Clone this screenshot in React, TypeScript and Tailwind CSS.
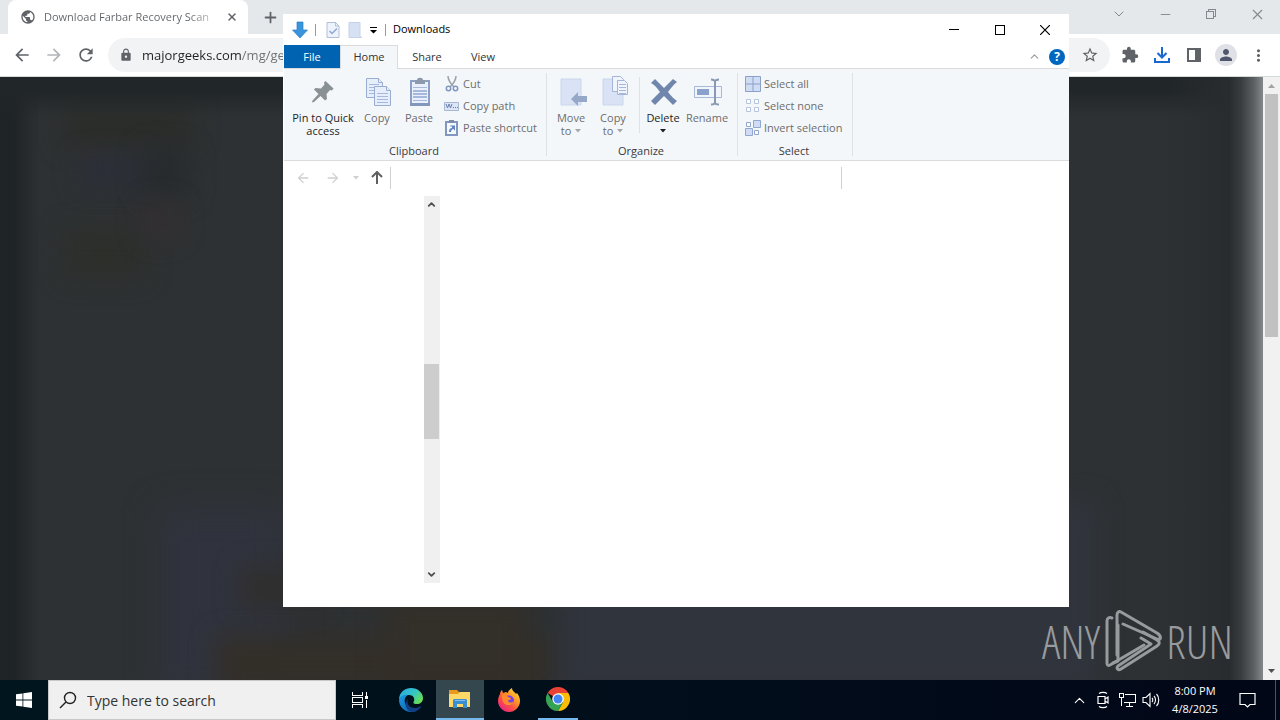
import type { ReactNode } from 'react';
import { ChevronDown, ChevronUp, Minus, Plus, X } from 'lucide-react';
import {
  MdArrowBack,
  MdArrowForward,
  MdExtension,
  MdLock,
  MdMoreVert,
  MdPerson,
  MdPublic,
  MdRefresh,
  MdStarBorder,
} from 'react-icons/md';

interface IconButtonProps {
  label: string;
  className?: string;
  children?: ReactNode;
}

const IconButton = ({ label, className = '', children }: IconButtonProps) => (
  <button type="button" aria-label={label} className={`flex shrink-0 items-center justify-center ${className}`}>
    {children}
  </button>
);

/* ---------- Browser ---------- */

const RestoreIcon = () => (
  <svg width="12" height="12" viewBox="0 0 12 12" fill="none" stroke="currentColor" shapeRendering="crispEdges">
    <path d="M1.5 3.5h7v7h-7zM3.5 3.5v-2h7v7h-2" />
  </svg>
);

const DownloadTrayIcon = () => (
  <svg width="18" height="18" viewBox="0 0 18 18" fill="none" stroke="#1967d2" strokeWidth="2">
    <path d="M9 1v10M4.5 7 9 11.5 13.5 7M2 12v4h14v-4" />
  </svg>
);

const SidePanelIcon = () => (
  <svg width="14" height="14" viewBox="0 0 14 14">
    <path d="M0 0h14v14H0zM2 2v10h6V2z" fill="#5f6368" fillRule="evenodd" />
  </svg>
);

const TabStrip = () => (
  <div className="flex h-[34px] shrink-0 bg-[#e5e8eb] pl-2">
    <div className="flex w-60 items-center rounded-t-lg bg-white pl-3 pr-2">
      <MdPublic className="size-4 shrink-0 text-[#5f6368]" />
      <span className="ml-2 w-[170px] whitespace-nowrap bg-[linear-gradient(to_right,#5f6368_145px,#d0d2d4_170px)] bg-clip-text text-[11px] text-transparent">
        Download Farbar Recovery Scan
      </span>
      <IconButton label="Close tab" className="ml-2.5 size-4 text-[#5f6368]">
        <X size={12} strokeWidth={3} />
      </IconButton>
    </div>
    <IconButton label="New tab" className="ml-2.5 w-6 text-[#5f6368]">
      <Plus size={17} strokeWidth={2.5} />
    </IconButton>
    <div className="ml-auto flex pb-1.5 text-[#85888c]">
      <IconButton label="Search tabs" className="w-[46px]">
        <ChevronDown size={16} strokeWidth={1.5} />
      </IconButton>
      <IconButton label="Minimize" className="w-[46px]">
        <Minus size={15} strokeWidth={1.5} />
      </IconButton>
      <IconButton label="Restore" className="w-[46px]">
        <RestoreIcon />
      </IconButton>
      <IconButton label="Close" className="w-[46px]">
        <X size={17} strokeWidth={1.5} />
      </IconButton>
    </div>
  </div>
);

const Toolbar = () => (
  <div className="flex h-[43px] shrink-0 items-center border-b border-[#d5dcd8] bg-white px-1.5 text-[#5f6368]">
    <IconButton label="Back" className="size-8">
      <MdArrowBack size={20} />
    </IconButton>
    <IconButton label="Forward" className="size-8 text-[#b3b6b9]">
      <MdArrowForward size={20} />
    </IconButton>
    <IconButton label="Reload" className="size-8">
      <MdRefresh size={20} />
    </IconButton>
    <div className="ml-1.5 mr-1 flex h-[34px] flex-1 items-center rounded-full bg-[#f1f3f4] pl-[11px] pr-2">
      <MdLock size={14} className="mr-[9px] shrink-0" />
      <input
        aria-label="Address and search bar"
        readOnly
        value="majorgeeks.com/mg/get"
        className="min-w-0 flex-1 bg-[linear-gradient(to_right,#202124_99px,#6c7074_99px)] bg-clip-text pt-px text-[13px] text-transparent outline-none"
      />
      <IconButton label="Bookmark this tab" className="size-6">
        <MdStarBorder size={18} />
      </IconButton>
    </div>
    <IconButton label="Extensions" className="size-8">
      <MdExtension size={18} />
    </IconButton>
    <IconButton label="Downloads" className="size-8">
      <DownloadTrayIcon />
    </IconButton>
    <IconButton label="Side panel" className="size-8">
      <SidePanelIcon />
    </IconButton>
    <IconButton label="Profile" className="size-8">
      <span className="flex size-[22px] items-center justify-center rounded-full bg-[#dfe1e6]">
        <MdPerson size={18} className="text-[#50566e]" />
      </span>
    </IconButton>
    <IconButton label="Menu" className="size-8">
      <MdMoreVert size={19} />
    </IconButton>
  </div>
);

const Watermark = () => (
  <div className="absolute bottom-2 right-[30px] flex items-center gap-1 font-['Open_Sans_Condensed_Light','Open_Sans_Condensed','Liberation_Sans_Narrow','Liberation_Sans',sans-serif] text-[46px] font-light leading-none text-[#989b9e]">
    <span>ANY</span>
    <svg width="58" height="62" viewBox="0 0 58 62" fill="none" stroke="currentColor" strokeWidth="3" strokeLinejoin="round" strokeLinecap="round">
      <path d="M8 8C5 7 3 8 3 11v42c0 2 1 3 3 2l34-20" />
      <path d="M13 45V5c0-3 2-4 4-3l36 21c3 2 4 4 3 6-1 1-2 0-3 0L19 14" />
      <path d="m9 53 5-2V15" />
      <path d="m39 22 14 8c3 2 3 4 0 6L17 59c-3 2-5-1-3-3l33-22-10-6" />
    </svg>
    <span>RUN</span>
  </div>
);

const WebPage = () => (
  <div className="flex min-h-0 flex-1">
    <main className="relative flex-1 overflow-hidden bg-[#2e3133]">
      {/* Blurred page content behind the dark overlay */}
      <div className="absolute left-16 top-7 h-10 w-32 bg-[#2b2d2a] blur-md" />
      <div className="absolute left-20 top-20 h-7 w-16 bg-[#2c2e39] blur-md" />
      <div className="absolute left-36 top-18 h-12 w-11 bg-[#272b2e] blur-md" />
      <div className="absolute left-16 top-38 h-12 w-20 bg-[#2d2f2b] blur-md" />
      <div className="absolute left-36 top-32 h-8 w-8 bg-[#352f32] blur-md" />
      <div className="absolute -bottom-5 left-40 h-48 w-32 bg-[#30333d] blur-lg" />
      <div className="absolute bottom-18 left-60 h-10 w-20 bg-[#302f2e] blur-md" />
      <div className="absolute -bottom-3 left-54 h-14 w-84 bg-[#332f29] blur-md" />
      <div className="absolute -bottom-3 left-96 h-24 w-36 bg-[#332f29] blur-md" />
      <div className="absolute -bottom-3 left-140 h-48 w-134 bg-[#30343d] blur-md" />
      <div className="absolute inset-y-0 left-0 w-10 bg-linear-to-r from-[#1f2427] from-35% to-transparent" />
      <div className="absolute inset-x-0 top-0 h-10 bg-linear-to-b from-[#212628] from-35% to-transparent" />
      <div className="absolute inset-y-0 right-0 w-24 bg-[linear-gradient(to_right,transparent,#282c2e_65%,#383c3e_77%,#5c5f61_90%,#85888a)]" />
      <Watermark />
    </main>
    <div className="flex w-[17px] flex-col items-center bg-[#f1f1f1]">
      <svg width="17" height="17" viewBox="0 0 17 17">
        <path d="m5 11 3.500-4 3.500 4z" fill="#a3a3a3" />
      </svg>
      <div className="h-[243px] w-[13px] bg-[#c1c1c1]" />
      <svg className="mt-auto" width="17" height="17" viewBox="0 0 17 17">
        <path d="m5 6 3.500 4L12 6z" fill="#505050" />
      </svg>
    </div>
  </div>
);

/* ---------- Explorer icons ---------- */

const DownArrowIcon = () => (
  <svg width="16" height="18" viewBox="0 0 16 18">
    <path d="M5 1h6v8h4.500L8 17 .5 9H5z" fill="#3a95dc" stroke="#2b7fc4" strokeWidth=".7" />
  </svg>
);

const PropertiesIcon = () => (
  <svg width="14" height="16" viewBox="0 0 14 16">
    <path d="M1 .5h8.500L13 4v11.500H1z" fill="#edf3fc" stroke="#b3bfd4" />
    <path d="M9.500.5V4H13" fill="none" stroke="#b3bfd4" />
    <path d="m3.500 9 2.500 2.500L11 6.500" fill="none" stroke="#8fa8d4" strokeWidth="1.500" />
  </svg>
);

const NewFolderIcon = () => (
  <svg width="14" height="16" viewBox="0 0 14 16">
    <path d="M1 .5h11v13l1.500 2H1z" fill="#d6e1f4" stroke="#c5d2ea" />
  </svg>
);

const PinIcon = () => (
  <svg width="32" height="32" viewBox="0 0 32 32" fill="#8a9194">
    <path d="m18.500 6 8 7.500-1.500 2-2-.5-3.500 4 .5 5-2 1.500-4.500-4.500L7 27l-2 .5.500-2 6-6.500L7 14.500 8.500 13l5.500.5 3.500-4-.5-2z" />
  </svg>
);

const SheetLines = ({ x, y, w }: { x: number; y: number; w: number }) => (
  <path
    d={`M${x} ${y}h${w}M${x} ${y + 3}h${w}M${x} ${y + 6}h${w}M${x} ${y + 9}h${w}`}
    stroke="#a6b9dc"
    fill="none"
  />
);

const CopyIcon = () => (
  <svg width="32" height="32" viewBox="0 0 32 32" fill="#e6edfb" stroke="#9aadd0">
    <path d="M5.500 3.500h12l4 4v15h-16z" />
    <path d="M17.500 3.500v4h4" />
    <SheetLines x={8} y={9.5} w={10} />
    <path d="M13.500 11.500h12l4 4v15h-16z" />
    <path d="M25.500 11.500v4h4" />
    <SheetLines x={16} y={18.5} w={11} />
  </svg>
);

const PasteIcon = () => (
  <svg width="32" height="32" viewBox="0 0 32 32">
    <path d="M8 6h18v24H8z" fill="#eaf0fb" stroke="#8d9fc2" strokeWidth="2" />
    <path d="M12 5h2c0-3 6-3 6 0h2v4H12z" fill="#8c98ac" />
    <SheetLines x={10} y={12.5} w={14} />
    <SheetLines x={10} y={16.5} w={14} />
    <path d="M7 28h20v3H7z" fill="#8396bb" />
  </svg>
);

const CutIcon = () => (
  <svg width="16" height="16" viewBox="0 0 16 16" fill="none" strokeWidth="1.500">
    <path d="M4 0c0 4 2 7 6 11M12 0c0 4-2 7-6 11" stroke="#9ca2a8" />
    <circle cx="4.500" cy="12.500" r="2.200" stroke="#8097bf" />
    <circle cx="11.500" cy="12.500" r="2.200" stroke="#8097bf" />
  </svg>
);

const CopyPathIcon = () => (
  <svg width="16" height="16" viewBox="0 0 16 16">
    <path d="M.5 4.500h14v8H.5z" fill="#dbe5f6" stroke="#a8b8d4" />
    <path d="m2 6 1.500 4L5 6l1.500 4L8 6M9 9.500h1M11 9.500h1M13 9.500h1" stroke="#6981ad" fill="none" />
  </svg>
);

const PasteShortcutIcon = () => (
  <svg width="16" height="16" viewBox="0 0 16 16">
    <path d="M2 2h11v13H2z" fill="#f4f8ff" stroke="#8297bf" strokeWidth="2" />
    <path d="M5 0h5v3H5z" fill="#7d8ba6" />
    <path d="M5 12c0-3 1-4 3-4V6.500H6.500l-.5-1h5v5l-1-.5V9c-2 0-3 1-3 3z" fill="#6485bd" />
  </svg>
);

const MoveToIcon = () => (
  <svg width="32" height="32" viewBox="0 0 32 32">
    <path d="M6 4h20v26H6z" fill="#d9e3f5" stroke="#c9d6ed" />
    <path d="m16 24 7-7v4h9v6h-9v4z" fill="#96a8c8" />
  </svg>
);

const CopyToIcon = () => (
  <svg width="32" height="32" viewBox="0 0 32 32">
    <path d="M6 4h20v26H6z" fill="#d9e3f5" stroke="#c9d6ed" />
    <g fill="#f0f4fc" stroke="#a3b5d8">
      <path d="M15.500 1.500h8l3 3v12h-11z" />
      <path d="M20.500 5.500h7l3 3v11h-10z" />
      <SheetLines x={22} y={9.5} w={7} />
    </g>
  </svg>
);

const DeleteIcon = () => (
  <svg width="32" height="32" viewBox="0 0 32 32">
    <path d="M8 4c3 3 6 6 9 9 3-3 6-6 9-9l4 3c-4 3-6 6-9 10 3 4 6 7 9 9l-4 4c-3-3-6-6-9-9-3 3-6 6-9 9l-4-4c3-3 6-6 9-9-3-4-5-7-9-9z" fill="#7186ad" />
  </svg>
);

const RenameIcon = () => (
  <svg width="32" height="32" viewBox="0 0 32 32">
    <path d="M3.500 11.500h27v11h-27z" fill="#f1f5fc" stroke="#a8b8d8" />
    <path d="M6 14h12v6H6z" fill="#8da2cb" />
    <path d="M20 4.500c3 0 4 1 4 2.500 0-1.500 1-2.500 4-2.500M24 6v21M20 29.500c3 0 4-1 4-2.500 0 1.500 1 2.500 4 2.500" stroke="#8a98b2" strokeWidth="2" fill="none" />
  </svg>
);

const SelectAllIcon = () => (
  <svg width="16" height="16" viewBox="0 0 16 16" fill="#cfdcf3" stroke="#8ca1c9">
    <path d="M.5.5h15v15H.5zM8 0v16M0 8h16" />
  </svg>
);

const SelectNoneIcon = () => (
  <svg width="16" height="16" viewBox="0 0 16 16" fill="#fff" stroke="#b6c4df">
    <path d="M1.500 1.500h4v4h-4zM9.500 1.500h4v4h-4zM1.500 9.500h4v4h-4zM9.500 9.500h4v4h-4z" />
  </svg>
);

const InvertSelectionIcon = () => (
  <svg width="16" height="16" viewBox="0 0 16 16" stroke="#92a7cf">
    <path d="M1.500 2.500h4v4h-4zM9.500 10.500h4v4h-4z" fill="#fff" />
    <path d="M8.500.5h7v7h-7zM.5 8.500h7v7h-7z" fill="#cfdcf3" />
  </svg>
);

const Caret = ({ className = '' }: { className?: string }) => (
  <svg width="6" height="4" viewBox="0 0 6 4" className={`inline-block ${className}`}>
    <path d="M0 0h6L3 3.500z" fill="currentColor" />
  </svg>
);

/* ---------- Explorer window ---------- */

interface LargeButtonProps {
  icon: ReactNode;
  lines: string[];
  width: string;
  enabled?: boolean;
  menu?: boolean;
}

const LargeButton = ({ icon, lines, width, enabled = false, menu = false }: LargeButtonProps) => (
  <button
    type="button"
    className={`flex flex-col items-center whitespace-nowrap pt-1.5 leading-[13px] ${width} ${
      enabled ? 'text-[#1e1e1e]' : 'text-[#6d6d6d]'
    }`}
  >
    {icon}
    <span className="mt-1">{lines[0]}</span>
    <span className="flex h-[13px] items-center gap-1">
      {lines[1]}
      {menu && <Caret className={enabled ? '' : 'text-[#a6a6a6]'} />}
    </span>
  </button>
);

const SmallButton = ({ icon, label }: { icon: ReactNode; label: string }) => (
  <button type="button" className="flex h-[22px] items-center gap-[3px] whitespace-nowrap text-[#6d6d6d]">
    {icon}
    <span>{label}</span>
  </button>
);

const RibbonGroup = ({ title, width, children }: { title: string; width: string; children: ReactNode }) => (
  <section className={`relative flex flex-col ${width}`}>
    <div className="flex flex-1">{children}</div>
    <h2 className="pb-[3px] pr-[3px] text-center leading-[13px] text-[#3a3a3a]">{title}</h2>
    <span className="absolute bottom-1 right-0 top-1 w-px bg-[#dfe2e5]" />
  </section>
);

const Ribbon = () => (
  <div className="flex h-[92px] shrink-0 border-b border-[#d9dbdd] bg-[#f4f7fa] text-[11px]">
    <RibbonGroup title="Clipboard" width="w-[263px]">
      <div className="flex pl-1.5">
        <LargeButton icon={<PinIcon />} lines={['Pin to Quick', 'access']} width="w-[66px]" enabled />
        <LargeButton icon={<CopyIcon />} lines={['Copy']} width="w-[42px]" />
        <LargeButton icon={<PasteIcon />} lines={['Paste']} width="w-[42px]" />
      </div>
      <div className="flex flex-col pl-1 pt-1">
        <SmallButton icon={<CutIcon />} label="Cut" />
        <SmallButton icon={<CopyPathIcon />} label="Copy path" />
        <SmallButton icon={<PasteShortcutIcon />} label="Paste shortcut" />
      </div>
    </RibbonGroup>
    <RibbonGroup title="Organize" width="w-[191px]">
      <div className="flex pl-[3px]">
        <LargeButton icon={<MoveToIcon />} lines={['Move', 'to']} width="w-[42px]" menu />
        <LargeButton icon={<CopyToIcon />} lines={['Copy', 'to']} width="w-[42px]" menu />
      </div>
      <span className="ml-[5px] mr-px mt-2 h-14 w-px bg-[#dfe2e5]" />
      <LargeButton icon={<DeleteIcon />} lines={['Delete']} width="w-[44px]" enabled menu />
      <LargeButton icon={<RenameIcon />} lines={['Rename']} width="w-[44px]" />
    </RibbonGroup>
    <RibbonGroup title="Select" width="w-[115px]">
      <div className="flex flex-col pl-[7px] pt-1">
        <SmallButton icon={<SelectAllIcon />} label="Select all" />
        <SmallButton icon={<SelectNoneIcon />} label="Select none" />
        <SmallButton icon={<InvertSelectionIcon />} label="Invert selection" />
      </div>
    </RibbonGroup>
  </div>
);

const TitleBar = () => (
  <div className="flex h-[31px] shrink-0 items-center pl-2 pr-px">
    <DownArrowIcon />
    <span className="ml-[7px] h-3 w-px bg-[#9a9a9a]" />
    <IconButton label="Properties" className="ml-2.5">
      <PropertiesIcon />
    </IconButton>
    <IconButton label="New folder" className="ml-2">
      <NewFolderIcon />
    </IconButton>
    <IconButton label="Customize Quick Access Toolbar" className="ml-2 pt-0.5">
      <svg width="7" height="7" viewBox="0 0 7 7">
        <path d="M0 0h7v1H0zM0 3h7L3.500 6.500z" />
      </svg>
    </IconButton>
    <span className="ml-2 h-3 w-px bg-[#9a9a9a]" />
    <h1 className="ml-[7px] text-[11px] text-black">Downloads</h1>
    <div className="ml-auto flex h-full text-black">
      <IconButton label="Minimize" className="w-[46px]">
        <svg width="10" height="1">
          <path d="M0 0h10v1H0z" />
        </svg>
      </IconButton>
      <IconButton label="Maximize" className="w-[45px]">
        <svg width="10" height="10" viewBox="0 0 10 10" fill="none" stroke="currentColor" shapeRendering="crispEdges">
          <path d="M.5.5h9v9h-9z" />
        </svg>
      </IconButton>
      <IconButton label="Close" className="w-[46px]">
        <svg width="10" height="10" viewBox="0 0 10 10" stroke="currentColor" strokeWidth="1.200">
          <path d="m0 0 10 10M10 0 0 10" />
        </svg>
      </IconButton>
    </div>
  </div>
);

const RibbonTabs = () => (
  <div className="flex h-6 shrink-0 items-stretch border-b border-[#dadbdc] text-[11px] text-[#333]">
    <button type="button" className="w-14 bg-[#0063b1] pt-px text-white">
      File
    </button>
    <button type="button" className="-mb-px w-[58px] border border-b-0 border-[#dadbdc] bg-[#f4f7fa]">
      Home
    </button>
    <button type="button" className="w-[58px] pt-px">
      Share
    </button>
    <button type="button" className="w-[54px] pt-px">
      View
    </button>
    <IconButton label="Minimize the Ribbon" className="ml-auto mr-2 text-[#9a9a9a]">
      <ChevronUp size={13} strokeWidth={2} />
    </IconButton>
    <IconButton label="Help" className="mr-1">
      <span className="flex size-4 items-center justify-center rounded-full bg-[#0067c0] text-[12px] font-bold text-white">
        ?
      </span>
    </IconButton>
  </div>
);

const ExplorerWindow = () => (
  <div className="absolute left-[283px] top-[14px] flex h-[593px] w-[786px] flex-col bg-white pl-px">
    <TitleBar />
    <RibbonTabs />
    <Ribbon />
    <div className="flex h-[35px] shrink-0 items-center pb-px">
      <IconButton label="Back" className="ml-[7px] w-6 text-[#d0d0d0]">
        <MdArrowBack size={16} />
      </IconButton>
      <IconButton label="Forward" className="ml-1.5 w-6 text-[#d0d0d0]">
        <MdArrowForward size={16} />
      </IconButton>
      <IconButton label="Recent locations" className="ml-[7px] w-2 text-[#d0d0d0]">
        <Caret />
      </IconButton>
      <IconButton label="Up" className="ml-2 mr-1 w-[18px] text-[#5f5f5f]">
        <svg width="14" height="14" viewBox="0 0 14 14" fill="none" stroke="currentColor" strokeWidth="2">
          <path d="M7 13V1M2 6l5-5 5 5" />
        </svg>
      </IconButton>
      <input aria-label="Address" className="h-[22px] w-[451px] border-l border-[#d0d0d0] outline-none" />
      <input aria-label="Search Downloads" className="h-[22px] min-w-0 flex-1 border-l border-[#d0d0d0] outline-none" />
    </div>
    <div className="mb-6 flex min-h-0 flex-1">
      <nav className="w-[140px]" />
      <div className="flex w-4 flex-col bg-[#f0f0f0] text-[#505050]">
        <IconButton label="Scroll up" className="h-[17px] w-[15px]">
          <ChevronUp size={11} strokeWidth={4} />
        </IconButton>
        <div className="mt-[151px] h-[75px] w-[15px] bg-[#cdcdcd]" />
        <IconButton label="Scroll down" className="mt-auto h-[17px] w-[15px]">
          <ChevronDown size={11} strokeWidth={4} />
        </IconButton>
      </div>
    </div>
  </div>
);

/* ---------- Taskbar ---------- */

const StartIcon = () => (
  <svg width="16" height="16" viewBox="0 0 16 16" fill="#fff">
    <path d="M0 2.300 6.500 1.400v6.200H0zM7.300 1.300 16 0v7.600H7.300zM0 8.400h6.500v6.200L0 13.700zM7.300 8.400H16V16l-8.700-1.300z" />
  </svg>
);

const SearchIcon = () => (
  <svg width="18" height="18" viewBox="0 0 18 18" fill="none" stroke="#222" strokeWidth="1.400">
    <circle cx="11" cy="7" r="5.500" />
    <path d="m7 11-6 6" />
  </svg>
);

const TaskViewIcon = () => (
  <svg width="18" height="18" viewBox="0 0 18 18" fill="none" stroke="#fff" shapeRendering="crispEdges">
    <path d="M1.500 1v3.500h10V1M1.500 6.500h10v5h-10zM1.500 17v-3.500h10V17M15.500 1v4M15.500 9v8" />
    <path d="M14 5h3v3h-3z" fill="#fff" stroke="none" />
  </svg>
);

const EdgeIcon = () => (
  <svg width="24" height="24" viewBox="0 0 24 24">
    <defs>
      <linearGradient id="edgeTop" x1="0" y1="0" x2="1" y2=".6">
        <stop offset="0" stopColor="#2aa6e6" />
        <stop offset=".6" stopColor="#34c6c4" />
        <stop offset="1" stopColor="#66dd58" />
      </linearGradient>
      <linearGradient id="edgeLeft" x1="0" y1="0" x2="1" y2="1">
        <stop offset="0" stopColor="#1e9be0" />
        <stop offset="1" stopColor="#0b56a4" />
      </linearGradient>
    </defs>
    <path d="M0 12C0 4 6 0 12 0c7 0 12 5 12 10 0 4-3 6-6 6-4 0-4-1-3-3 1-3-1-6-5-6C5 7 1 9 0 12z" fill="url(#edgeTop)" />
    <path d="M0 12c1-4 5-6 9-5-4 2-4 7-2 10 3 5 10 5 15 1-2 4-6 6-10 6C5 24 0 18 0 12z" fill="url(#edgeLeft)" />
    <path d="M9 11c-2 4 1 9 7 9 2 0 4-.5 6-2-2 4-6 6-9 6C6 23 5 14 9 11z" fill="#123f83" />
  </svg>
);

const FolderIcon = () => (
  <svg width="24" height="20" viewBox="0 0 24 20">
    <path d="M1 1h8l2 2h11v5H1z" fill="#e79a1e" />
    <path d="M1 5h9l2-2h10v15H1z" fill="#ffd967" />
    <path d="M5 19v-8l1-1h12l1 1v8h-4v-4H9v4z" fill="#3b8fd1" />
    <path d="M7 11h10v1H7z" fill="#7ec1ee" />
  </svg>
);

const FirefoxIcon = () => (
  <svg width="24" height="24" viewBox="0 0 24 24">
    <defs>
      <linearGradient id="fox" x1="1" y1="0" x2=".2" y2="1">
        <stop offset="0" stopColor="#fff04a" />
        <stop offset=".4" stopColor="#ff9a26" />
        <stop offset=".7" stopColor="#ff4b48" />
        <stop offset="1" stopColor="#e3228a" />
      </linearGradient>
    </defs>
    <path d="M3 6c0-2 1-3 2-4l1 3 3-1 2 1c0-2 2-4 4-5 0 3 3 4 4 6l1-1c2 3 3 5 3 8 0 6-5 11-11 11S1 19 1 13c0-3 1-5 2-7z" fill="url(#fox)" />
    <circle cx="12" cy="12.500" r="5" fill="#7542e5" />
    <path d="M5 7c3-1 5 0 6 2l3 1c0 2-3 2-3 3 1 2 4 2 6 0-1 4-4 5-7 4-4-1-5-5-5-10z" fill="#ff8a2a" />
  </svg>
);

const ChromeIcon = () => (
  <svg width="24" height="24" viewBox="0 0 24 24">
    <path d="M12 12 1.600 6A12 12 0 0 1 22.400 6z" fill="#e94235" />
    <path d="M12 12V6h10.400A12 12 0 0 1 12 24l5-9z" fill="#fbbc05" />
    <path d="M1.600 6 7 15l5 2 5-2-5 9A12 12 0 0 1 1.600 6z" fill="#34a353" />
    <circle cx="12" cy="12" r="5.800" fill="#fff" />
    <circle cx="12" cy="12" r="4.500" fill="#4285f4" />
  </svg>
);

const MeetNowIcon = () => (
  <svg width="16" height="18" viewBox="0 0 16 18" fill="none" stroke="#fff" strokeWidth="1.200">
    <path d="M3 5.500h7v7H3zM10 8l3-2v6l-3-2M4 2.500c2-1.500 6-1.500 8 0M4 15.500c2 1.500 6 1.500 8 0" />
  </svg>
);

const NetworkIcon = () => (
  <svg width="17" height="16" viewBox="0 0 17 16" fill="none" stroke="#fff" shapeRendering="crispEdges">
    <path d="M5.500 2.500h11v8h-12M10.500 11v3M7 14.500h7M.5 1.500h4v4h-4zM2.500 6v8" />
  </svg>
);

const SpeakerIcon = () => (
  <svg width="18" height="16" viewBox="0 0 18 16" fill="none" stroke="#fff" strokeWidth="1.100">
    <path d="M1 5.500h3l4-4v13l-4-4H1zM10 6c1 1 1 3 0 4M12 4c2 2 2 6 0 8M14.500 2c3 3 3 9 0 12" />
  </svg>
);

const NotificationIcon = () => (
  <svg width="17" height="17" viewBox="0 0 17 17" fill="none" stroke="#fff" strokeWidth="1.200">
    <path d="M1 1.500h15v11h-5L8.500 15 6 12.500H1z" />
  </svg>
);

const Taskbar = () => (
  <footer className="flex h-10 shrink-0 bg-linear-to-r from-[#00151d] to-[#020718] text-white">
    <IconButton label="Start" className="w-12">
      <StartIcon />
    </IconButton>
    <label className="flex w-72 items-center gap-2.5 border border-[#c8c8c8] bg-[#f0f0f0] pl-2.5">
      <SearchIcon />
      <input
        aria-label="Search"
        placeholder="Type here to search"
        className="min-w-0 flex-1 text-[14px] outline-none placeholder:text-[#333]"
      />
    </label>
    <IconButton label="Task View" className="w-12">
      <TaskViewIcon />
    </IconButton>
    <IconButton label="Microsoft Edge" className="ml-0.5 w-[50px]">
      <EdgeIcon />
    </IconButton>
    <IconButton label="File Explorer" className="w-12 border-b-2 border-[#76b9ed] bg-[#34474f]">
      <FolderIcon />
    </IconButton>
    <IconButton label="Firefox" className="w-[50px]">
      <FirefoxIcon />
    </IconButton>
    <IconButton label="Google Chrome" className="ml-1 w-10 border-b-2 border-[#76b9ed]">
      <ChromeIcon />
    </IconButton>
    <div className="ml-auto flex">
      <IconButton label="Show hidden icons" className="w-6">
        <ChevronUp size={17} strokeWidth={1.5} />
      </IconButton>
      <IconButton label="Meet Now" className="w-6">
        <MeetNowIcon />
      </IconButton>
      <IconButton label="Network" className="w-6">
        <NetworkIcon />
      </IconButton>
      <IconButton label="Volume" className="w-6">
        <SpeakerIcon />
      </IconButton>
      <button type="button" className="w-16 whitespace-nowrap text-center text-[11px] leading-[18px]">
        8:00 PM
        <br />
        4/8/2025
      </button>
      <IconButton label="Notifications" className="w-10">
        <NotificationIcon />
      </IconButton>
      <IconButton label="Show desktop" className="ml-2 w-[5px] border-l border-[#4a5560]" />
    </div>
  </footer>
);

export default function App() {
  return (
    <div className="relative flex h-screen flex-col overflow-hidden font-['Open_Sans',sans-serif]">
      <TabStrip />
      <Toolbar />
      <WebPage />
      <ExplorerWindow />
      <Taskbar />
    </div>
  );
}
